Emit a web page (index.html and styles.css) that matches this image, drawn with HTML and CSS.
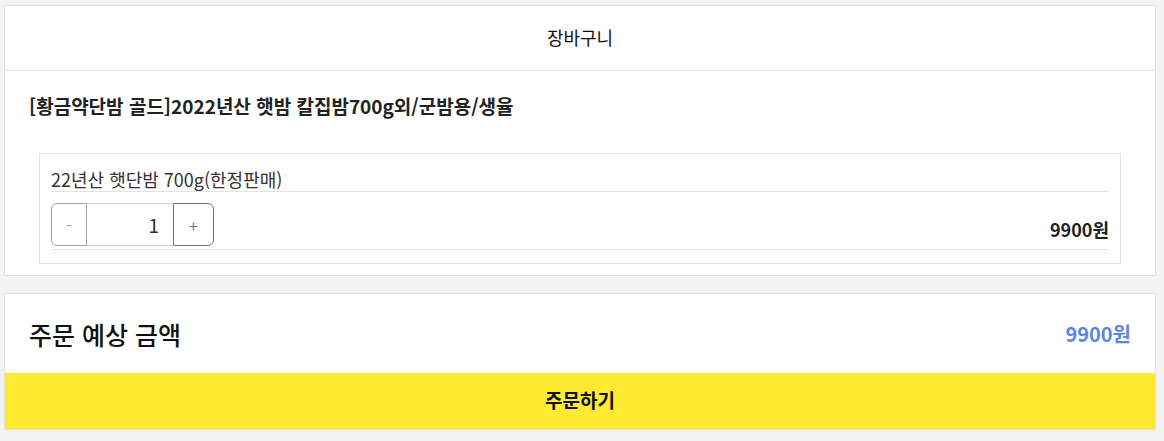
FILE: index.html
```html
<!DOCTYPE html>
<html lang="ko">
<head>
    <meta charset="UTF-8">
    <meta name="viewport" content="width=device-width, initial-scale=1.0">
    <title>장바구니</title>
    <link rel="stylesheet" href="styles.css">
</head>
<body>

    <div class="card cart">
        <div class="cart-header">장바구니</div>
        <div class="cart-body">
            <h2 class="product-name">[황금약단밤 골드]2022년산 햇밤 칼집밤700g외/군밤용/생율</h2>

            <div class="option-box">
                <div class="option-name">22년산 햇단밤 700g(한정판매)</div>
                <div class="option-row">
                    <div class="stepper">
                        <button type="button" class="step minus" disabled>-</button>
                        <input type="text" class="qty" value="1">
                        <button type="button" class="step plus">+</button>
                    </div>
                    <span class="option-price">9900원</span>
                </div>
            </div>
        </div>
    </div>

    <div class="card total">
        <div class="total-row">
            <span class="total-label">주문 예상 금액</span>
            <span class="total-price">9900원</span>
        </div>
        <button type="button" class="order-btn">주문하기</button>
    </div>

</body>
</html>
```

FILE: styles.css
```css
body {
    margin: 0;
    padding: 5px 8px 0 4px;
    background-color: #f3f3f3;
    font-family: "Noto Sans CJK KR", "Noto Sans", sans-serif;
    color: #222;
}
.card {
    background-color: #fff;
    border: 1px solid #e2e2e2;
}
.cart-header {
    height: 64px;
    line-height: 62px;
    text-align: center;
    font-size: 18px;
    color: #111;
    border-bottom: 1px solid #e2e2e2;
}
.cart-body {
    padding: 0 34px 11px 24px;
}
.product-name {
    margin: 0;
    padding: 22px 0 34px;
    font-size: 19px;
    font-weight: bold;
    line-height: 26px;
}
.option-box {
    border: 1px solid #e2e2e2;
    margin-left: 10px;
    padding: 0 11px 13px 11px;
}
.option-name {
    font-size: 18px;
    color: #333;
    padding-top: 13px;
    line-height: 24px;
    border-bottom: 1px solid #e2e2e2;
}
.option-row {
    display: flex;
    justify-content: space-between;
    align-items: flex-end;
    padding: 11px 0 3px;
    border-bottom: 1px solid #e2e2e2;
}
.stepper {
    display: flex;
    height: 43px;
}
.step {
    width: 36px;
    padding: 0;
    background: #fff;
    border: 1px solid #6c757d;
    color: #6c757d;
    font-size: 16px;
    font-family: inherit;
    cursor: pointer;
}
.minus {
    border-radius: 6px 0 0 6px;
    opacity: 0.65;
}
.plus {
    width: 41px;
    border-radius: 0 6px 6px 0;
}
.qty {
    width: 86px;
    box-sizing: border-box;
    margin: 0;
    padding: 0 14px;
    border: 1px solid #ced4da;
    border-left: none;
    border-right: none;
    text-align: right;
    font-size: 19px;
    font-family: inherit;
    color: #3a2a1a;
}
.option-price {
    font-size: 18px;
    font-weight: bold;
    line-height: 30px;
    margin-bottom: 2px;
}
.total {
    margin-top: 17px;
}
.total-row {
    display: flex;
    justify-content: space-between;
    align-items: center;
    height: 79px;
    padding: 0 24px 0 24px;
}
.total-label {
    font-size: 25px;
    font-weight: 500;
    color: #111;
}
.total-price {
    font-size: 20px;
    font-weight: bold;
    color: #5b86e5;
}
.order-btn {
    display: block;
    width: 100%;
    height: 56px;
    padding: 0 0 4px;
    border: none;
    background-color: #ffe931;
    font-family: inherit;
    font-size: 19px;
    font-weight: bold;
    color: #111;
    cursor: pointer;
}
```
